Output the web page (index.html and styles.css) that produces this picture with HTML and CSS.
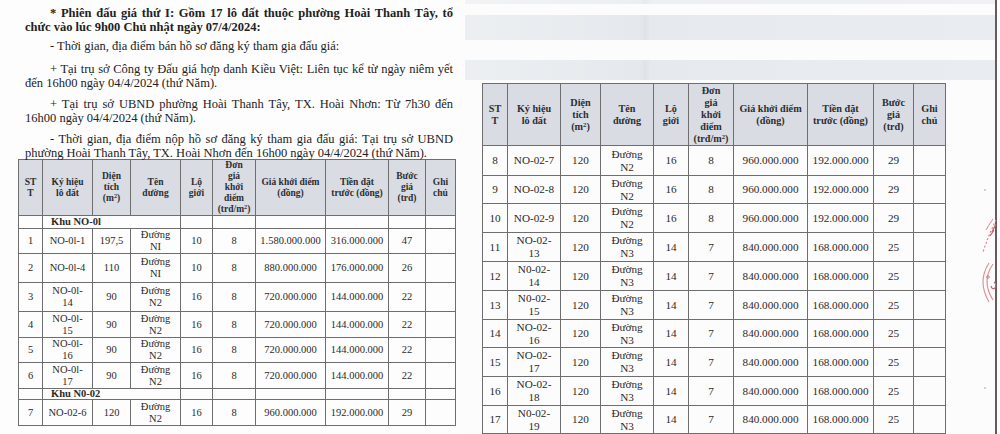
FILE: index.html
```html
<!DOCTYPE html>
<html lang="vi">
<head>
<meta charset="utf-8">
<title>Phiên đấu giá thứ I</title>
<link rel="stylesheet" href="styles.css">
</head>
<body>
<div class="page">
  <section class="left">
    <div class="intro">
      <div class="para p1 bold">
        <div class="ln ind j">* Phiên đấu giá thứ I: Gồm 17 lô đất thuộc phường Hoài Thanh Tây, tổ</div>
        <div class="ln">chức vào lúc 9h00 Chủ nhật ngày 07/4/2024:</div>
      </div>
      <div class="para p2">
        <div class="ln ind">- Thời gian, địa điểm bán hồ sơ đăng ký tham gia đấu giá:</div>
      </div>
      <div class="para">
        <div class="ln ind j">+ Tại trụ sở Công ty Đấu giá hợp danh Kiều Việt: Liên tục kể từ ngày niêm yết</div>
        <div class="ln">đến 16h00 ngày 04/4/2024 (thứ Năm).</div>
      </div>
      <div class="para">
        <div class="ln ind j">+ Tại trụ sở UBND phường Hoài Thanh Tây, TX. Hoài Nhơn: Từ 7h30 đến</div>
        <div class="ln">16h00 ngày 04/4/2024 (thứ Năm).</div>
      </div>
      <div class="para last">
        <div class="ln ind j">- Thời gian, địa điểm nộp hồ sơ đăng ký tham gia đấu giá: Tại trụ sở UBND</div>
        <div class="ln">phường Hoài Thanh Tây, TX. Hoài Nhơn đến 16h00 ngày 04/4/2024 (thứ Năm).</div>
      </div>
    </div>

    <table class="lots lots-l">
      <colgroup>
        <col class="c24"><col class="c50"><col class="c38"><col class="c50"><col class="c32">
        <col class="c43"><col class="c70"><col class="c63"><col class="c37"><col class="c30">
      </colgroup>
      <thead>
        <tr class="hd">
          <th>ST<br>T</th><th>Ký hiệu<br>lô đất</th><th>Diện<br>tích<br>(m<sup>2</sup>)</th><th>Tên<br>đường</th><th>Lộ<br>giới</th>
          <th>Đơn<br>giá<br>khởi<br>điểm<br>(trđ/m<sup>2</sup>)</th><th>Giá khởi điểm<br>(đồng)</th><th>Tiền đặt<br>trước (đồng)</th><th>Bước<br>giá<br>(trđ)</th><th>Ghi<br>chú</th>
        </tr>
      </thead>
      <tbody>
        <tr class="khu k1"><td></td><td colspan="3" class="kname">Khu NO-0l</td><td></td><td></td><td></td><td></td><td></td><td></td></tr>
        <tr class="r25"><td>1</td><td>NO-0l-1</td><td>197,5</td><td>Đường<br>NI</td><td>10</td><td>8</td><td>1.580.000.000</td><td>316.000.000</td><td>47</td><td></td></tr>
        <tr class="r29"><td>2</td><td>NO-0l-4</td><td>110</td><td>Đường<br>NI</td><td>10</td><td>8</td><td>880.000.000</td><td>176.000.000</td><td>26</td><td></td></tr>
        <tr class="r29"><td>3</td><td>NO-0l-<br>14</td><td>90</td><td>Đường<br>N2</td><td>16</td><td>8</td><td>720.000.000</td><td>144.000.000</td><td>22</td><td></td></tr>
        <tr class="r26"><td>4</td><td>NO-0l-<br>15</td><td>90</td><td>Đường<br>N2</td><td>16</td><td>8</td><td>720.000.000</td><td>144.000.000</td><td>22</td><td></td></tr>
        <tr class="r25"><td>5</td><td>NO-0l-<br>16</td><td>90</td><td>Đường<br>N2</td><td>16</td><td>8</td><td>720.000.000</td><td>144.000.000</td><td>22</td><td></td></tr>
        <tr class="r26"><td>6</td><td>NO-0l-<br>17</td><td>90</td><td>Đường<br>N2</td><td>16</td><td>8</td><td>720.000.000</td><td>144.000.000</td><td>22</td><td></td></tr>
        <tr class="khu k2"><td></td><td colspan="3" class="kname">Khu N0-02</td><td></td><td></td><td></td><td></td><td></td><td></td></tr>
        <tr class="r26"><td>7</td><td>NO-02-6</td><td>120</td><td>Đường<br>N2</td><td>16</td><td>8</td><td>960.000.000</td><td>192.000.000</td><td>29</td><td></td></tr>
      </tbody>
    </table>
  </section>

  <section class="right">
    <div class="bleed">
      <div class="band b1"></div>
      <div class="band b2"></div>
      <div class="band b3"></div>
    </div>
    <table class="lots lots-r">
      <colgroup>
        <col class="c25"><col class="c53"><col class="c40"><col class="c53"><col class="c35">
        <col class="c45"><col class="c74"><col class="c66"><col class="c40"><col class="c32">
      </colgroup>
      <thead>
        <tr class="hd">
          <th>ST<br>T</th><th>Ký hiệu<br>lô đất</th><th>Diện<br>tích<br>(m<sup>2</sup>)</th><th>Tên<br>đường</th><th>Lộ<br>giới</th>
          <th>Đơn<br>giá<br>khởi<br>điểm<br>(trđ/m<sup>2</sup>)</th><th>Giá khởi điểm<br>(đồng)</th><th>Tiền đặt<br>trước (đồng)</th><th>Bước<br>giá<br>(trđ)</th><th>Ghi<br>chú</th>
        </tr>
      </thead>
      <tbody>
        <tr class="r30"><td>8</td><td>NO-02-7</td><td>120</td><td>Đường<br>N2</td><td>16</td><td>8</td><td>960.000.000</td><td>192.000.000</td><td>29</td><td></td></tr>
        <tr class="r28"><td>9</td><td>NO-02-8</td><td>120</td><td>Đường<br>N2</td><td>16</td><td>8</td><td>960.000.000</td><td>192.000.000</td><td>29</td><td></td></tr>
        <tr class="r29"><td>10</td><td>NO-02-9</td><td>120</td><td>Đường<br>N2</td><td>16</td><td>8</td><td>960.000.000</td><td>192.000.000</td><td>29</td><td></td></tr>
        <tr class="r29"><td>11</td><td>NO-02-<br>13</td><td>120</td><td>Đường<br>N3</td><td>14</td><td>7</td><td>840.000.000</td><td>168.000.000</td><td>25</td><td></td></tr>
        <tr class="r29"><td>12</td><td>N0-02-<br>14</td><td>120</td><td>Đường<br>N3</td><td>14</td><td>7</td><td>840.000.000</td><td>168.000.000</td><td>25</td><td></td></tr>
        <tr class="r29"><td>13</td><td>N0-02-<br>15</td><td>120</td><td>Đường<br>N3</td><td>14</td><td>7</td><td>840.000.000</td><td>168.000.000</td><td>25</td><td></td></tr>
        <tr class="r28"><td>14</td><td>NO-02-<br>16</td><td>120</td><td>Đường<br>N3</td><td>14</td><td>7</td><td>840.000.000</td><td>168.000.000</td><td>25</td><td></td></tr>
        <tr class="r29"><td>15</td><td>NO-02-<br>17</td><td>120</td><td>Đường<br>N3</td><td>14</td><td>7</td><td>840.000.000</td><td>168.000.000</td><td>25</td><td></td></tr>
        <tr class="r29"><td>16</td><td>NO-02-<br>18</td><td>120</td><td>Đường<br>N3</td><td>14</td><td>7</td><td>840.000.000</td><td>168.000.000</td><td>25</td><td></td></tr>
        <tr class="r28"><td>17</td><td>N0-02-<br>19</td><td>120</td><td>Đường<br>N3</td><td>14</td><td>7</td><td>840.000.000</td><td>168.000.000</td><td>25</td><td></td></tr>
      </tbody>
    </table>
  </section>

  <svg class="stamp" width="32" height="220" viewBox="965 180 32 220" aria-hidden="true">
    <circle cx="985" cy="190" r="0.8" fill="#9a9a9a"/>
    <circle cx="985" cy="388" r="0.8" fill="#9a9a9a"/>
    <path d="M996 220 Q989 234 983 252" fill="none" stroke="#d9868c" stroke-width="1.2" stroke-dasharray="2 2"/>
    <path d="M993 219 Q988 226 986 230" fill="none" stroke="#d9868c" stroke-width="1"/>
    <path d="M996 224 L992 232 M994 230 L990 236" fill="none" stroke="#c9606a" stroke-width="1.3"/>
    <path d="M989 263 Q977 281 989 302" fill="none" stroke="#dc8c92" stroke-width="1.1"/>
    <path d="M993 264 Q981 281 993 300" fill="none" stroke="#dc8c92" stroke-width="1.1"/>
    <circle cx="988" cy="277" r="1.3" fill="none" stroke="#d0707a" stroke-width="0.9"/>
    <path d="M994 282 q3 2 1 6 q-3 2 -4 -2" fill="none" stroke="#c9606a" stroke-width="1.2"/>
  </svg>
</div>
</body>
</html>
```

FILE: styles.css
```css
html, body {
  margin: 0;
  padding: 0;
}

body {
  width: 1000px;
  height: 434px;
  overflow: hidden;
  background: #fdfdfd;
  font-family: "Liberation Serif", "Times New Roman", serif;
  color: #2b2b2b;
}

.page {
  position: relative;
  display: flex;
  height: 434px;
}

/* ---------- left page ---------- */
.left {
  width: 460px;
  flex: none;
}

.intro {
  padding: 6px 7px 0 25px;
  font-size: 12.5px;
  line-height: 14px;
  color: #222222;
}

.para {
  margin-bottom: 7px;
}

.para.p1 {
  margin-bottom: 5px;
}

.para.p2 {
  margin-bottom: 9px;
}

.para.last {
  margin-bottom: 0;
}

.bold {
  font-weight: bold;
}

.ln {
  white-space: nowrap;
}

.ln.ind {
  padding-left: 25px;
}

.ln.j {
  text-align: justify;
  text-align-last: justify;
}

/* ---------- tables ---------- */
.lots {
  border-collapse: collapse;
  table-layout: fixed;
  text-align: center;
  color: #2a2a2a;
}

.lots th,
.lots td {
  border: 1px solid #6e6e6e;
  padding: 0;
  vertical-align: middle;
  overflow: hidden;
  white-space: nowrap;
}

.lots th {
  background: #d9dce2;
  font-weight: bold;
  color: #2c2e32;
}

.lots sup {
  font-size: 0.65em;
  line-height: 0;
  vertical-align: 0.45em;
}

.lots td.kname {
  text-align: left;
  font-weight: bold;
  padding-left: 8px;
}

.lots-l {
  width: 437px;
  margin: -1px 0 0 18px;
  font-size: 10.5px;
  line-height: 12px;
}

.lots-l th {
  font-size: 9.5px;
  line-height: 11px;
}

.lots-l .hd { height: 56px; }
.lots-l .k1 { height: 13px; }
.lots-l .k2 { height: 11px; }
.lots-l .khu td { line-height: 10px; }

.r25 { height: 25px; }
.r26 { height: 26px; }
.r28 { height: 28px; }
.r29 { height: 29px; }
.r30 { height: 30px; }

.c24 { width: 24px; }
.c25 { width: 25px; }
.c30 { width: 30px; }
.c32 { width: 32px; }
.c35 { width: 35px; }
.c37 { width: 37px; }
.c38 { width: 38px; }
.c40 { width: 40px; }
.c43 { width: 43px; }
.c45 { width: 45px; }
.c50 { width: 50px; }
.c53 { width: 53px; }
.c63 { width: 63px; }
.c66 { width: 66px; }
.c70 { width: 70px; }
.c74 { width: 74px; }

/* ---------- right page ---------- */
.right {
  width: 535px;
  flex: none;
  border-right: 2px solid #5e5e5e;
  background: #fcfcfc;
}

.bleed {
  height: 83px;
  display: flex;
  flex-direction: column;
  padding-left: 5px;
}

.band {
  background: linear-gradient(90deg, #eceff2 0%, #e5e9ed 33%, #dfe3e8 34%, #e6eaee 35%, #e9ecf0 100%);
}

.band.b1 { height: 4px; opacity: 0.7; }
.band.b2 { height: 25px; margin-top: 11px; }
.band.b3 { height: 20px; margin-top: 20px; }

.lots-r {
  width: 463px;
  margin-left: 22px;
  font-size: 11.2px;
  line-height: 13px;
}

.lots-r th {
  font-size: 10.2px;
  line-height: 12px;
}

.lots-r .hd { height: 62px; }

/* ---------- stamp traces on the right edge ---------- */
.stamp {
  position: absolute;
  left: 965px;
  top: 180px;
}
```
